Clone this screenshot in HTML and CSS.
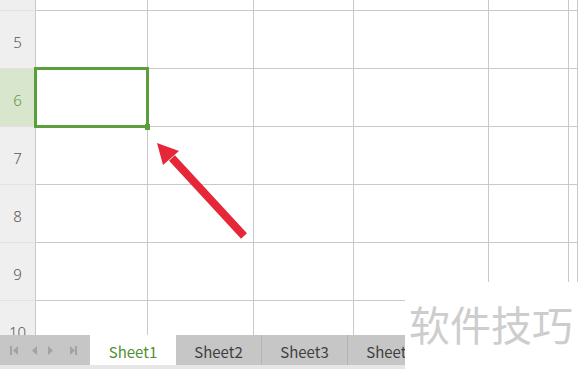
FILE: index.html
```html
<!DOCTYPE html>
<html>
<head>
<meta charset="utf-8">
<link rel="stylesheet" href="styles.css">
</head>
<body>
<div class="app">
  <div class="sheet">
    <div class="grid">
      <div class="rh top"></div><div class="c"></div><div class="c"></div><div class="c"></div><div class="c"></div><div class="c"></div><div class="c"></div>
      <div class="rh">5</div><div class="c"></div><div class="c"></div><div class="c"></div><div class="c"></div><div class="c"></div><div class="c"></div>
      <div class="rh active">6</div><div class="c"></div><div class="c"></div><div class="c"></div><div class="c"></div><div class="c"></div><div class="c"></div>
      <div class="rh">7</div><div class="c"></div><div class="c"></div><div class="c"></div><div class="c"></div><div class="c"></div><div class="c"></div>
      <div class="rh">8</div><div class="c"></div><div class="c"></div><div class="c"></div><div class="c"></div><div class="c"></div><div class="c"></div>
      <div class="rh">9</div><div class="c"></div><div class="c"></div><div class="c"></div><div class="c"></div><div class="c"></div><div class="c"></div>
      <div class="rh">10</div><div class="c"></div><div class="c"></div><div class="c"></div><div class="c"></div><div class="c"></div><div class="c"></div>
    </div>
    <div class="selection"><span class="handle"></span></div>
    <svg class="arrow" width="578" height="335" viewBox="0 0 578 335">
      <line x1="244" y1="236" x2="172" y2="158" stroke="#e62737" stroke-width="8"/>
      <polygon points="157,143 163,165 179,151" fill="#e62737"/>
    </svg>
  </div>
  <div class="tabbar">
    <div class="nav">
      <svg width="90" height="30" viewBox="0 0 90 30">
        <rect x="10" y="11" width="2" height="9" fill="#a3a3a3"/>
        <polygon points="18,11 18,20 13,15.5" fill="#a3a3a3"/>
        <polygon points="37,11 37,20 32,15.5" fill="#a3a3a3"/>
        <polygon points="48,11 48,20 53,15.5" fill="#a3a3a3"/>
        <polygon points="70,11 70,20 75,15.5" fill="#a3a3a3"/>
        <rect x="75" y="11" width="2" height="9" fill="#a3a3a3"/>
      </svg>
    </div>
    <div class="tab current">Sheet1</div>
    <div class="tab">Sheet2</div>
    <div class="tab">Sheet3</div>
    <div class="tab">Sheet4</div>
  </div>
  <div class="strip"></div>
  <div class="watermark">软件技巧</div>
</div>
</body>
</html>
```
FILE: styles.css
```css
html, body {
  margin: 0;
  padding: 0;
  background: #ffffff;
}
.app {
  position: relative;
  width: 578px;
  height: 369px;
  overflow: hidden;
  font-family: "Noto Sans", "Noto Sans CJK SC", sans-serif;
}
.sheet {
  position: relative;
  height: 335px;
  overflow: hidden;
}
.grid {
  display: grid;
  grid-template-columns: 36px 112px 106px 100px 135px 80px 1fr;
  grid-template-rows: 11px repeat(6, 58px);
}
.c {
  box-sizing: border-box;
  border-right: 1px solid #c9c9c9;
  border-bottom: 1px solid #c9c9c9;
  background: #ffffff;
}
.rh {
  box-sizing: border-box;
  background: #efefef;
  border-right: 1px solid #c9c9c9;
  border-bottom: 1px solid #e2e2e2;
  display: flex;
  align-items: center;
  justify-content: center;
  padding-top: 5px;
  font-size: 15px;
  font-weight: 300;
  color: #555555;
}
.rh.active {
  background: #d7e6cc;
  color: #5a9a3a;
}
.selection {
  position: absolute;
  left: 34px;
  top: 67px;
  width: 115px;
  height: 61px;
  box-sizing: border-box;
  border: 3px solid #5c9e3c;
}
.handle {
  position: absolute;
  right: -4px;
  bottom: -5px;
  width: 5px;
  height: 6px;
  background: #5c9e3c;
}
.arrow {
  position: absolute;
  left: 0;
  top: 0;
}
.tabbar {
  display: flex;
  height: 30px;
  background: #c6c6c6;
}
.nav {
  width: 90px;
  height: 30px;
}
.nav svg {
  display: block;
}
.tab {
  width: 86px;
  box-sizing: border-box;
  border-right: 1px solid #b3b3b3;
  display: flex;
  align-items: center;
  justify-content: center;
  font-family: "Noto Sans CJK SC", "Noto Sans", sans-serif;
  font-size: 15px;
  color: #3f3f3f;
  padding-top: 2px;
}
.tab.current {
  background: #ffffff;
  color: #4f8f33;
  border-right: none;
}
.strip {
  height: 4px;
  background: #e6e6e6;
}
.watermark {
  position: absolute;
  left: 405px;
  top: 282px;
  width: 173px;
  height: 87px;
  background: #ffffff;
  box-sizing: border-box;
  padding: 17px 0 0 4px;
  font-family: "Noto Sans CJK SC", sans-serif;
  font-size: 41px;
  line-height: 48px;
  color: #cdcdcd;
  white-space: nowrap;
}
```
